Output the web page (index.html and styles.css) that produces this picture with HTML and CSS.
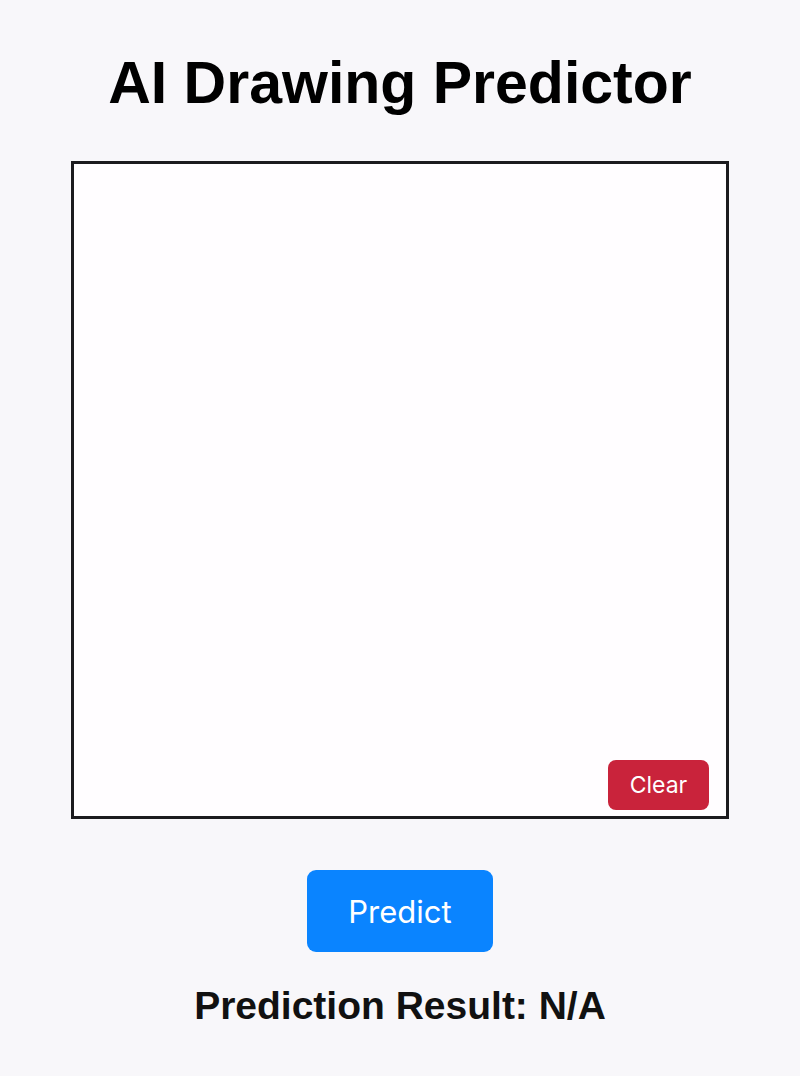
FILE: index.html
```html
<!DOCTYPE html>
<html lang="en">
<head>
<meta charset="utf-8">
<title>AI Drawing Predictor</title>
<link rel="stylesheet" href="styles.css">
</head>
<body>
<main class="app">
  <h1 class="title">AI Drawing Predictor</h1>
  <div class="board">
    <canvas class="canvas" width="652" height="652"></canvas>
    <button class="clear-btn" type="button">Clear</button>
  </div>
  <button class="predict-btn" type="button">Predict</button>
  <p class="result">Prediction Result: N/A</p>
</main>
</body>
</html>
```
FILE: styles.css
```css
html, body {
  margin: 0;
  padding: 0;
  background: #f8f7fa;
}
.app {
  display: flex;
  flex-direction: column;
  align-items: center;
  padding-top: 50px;
}
.title {
  margin: 0;
  font-family: "Liberation Sans", Arial, sans-serif;
  font-weight: 700;
  font-size: 59px;
  line-height: 67px;
  color: #000;
}
.board {
  position: relative;
  margin-top: 44px;
  width: 652px;
  height: 652px;
  border: 3px solid #1c1b1f;
  background: #fffdff;
}
.canvas {
  display: block;
  width: 652px;
  height: 652px;
}
.clear-btn {
  position: absolute;
  right: 17px;
  bottom: 6px;
  width: 101px;
  height: 50px;
  border: none;
  border-radius: 8px;
  background: #c9233b;
  color: #fff;
  font-family: Inter, "Noto Sans", sans-serif;
  font-size: 23px;
  padding: 0;
}
.predict-btn {
  margin-top: 51px;
  width: 186px;
  height: 82px;
  border: none;
  border-radius: 9px;
  background: #0a84ff;
  color: #fff;
  font-family: Inter, "Noto Sans", sans-serif;
  font-size: 31px;
  padding: 0;
}
.result {
  margin: 31px 0 0;
  font-family: "Liberation Sans", Arial, sans-serif;
  font-weight: 700;
  font-size: 39px;
  line-height: 45px;
  color: #111;
}
```
